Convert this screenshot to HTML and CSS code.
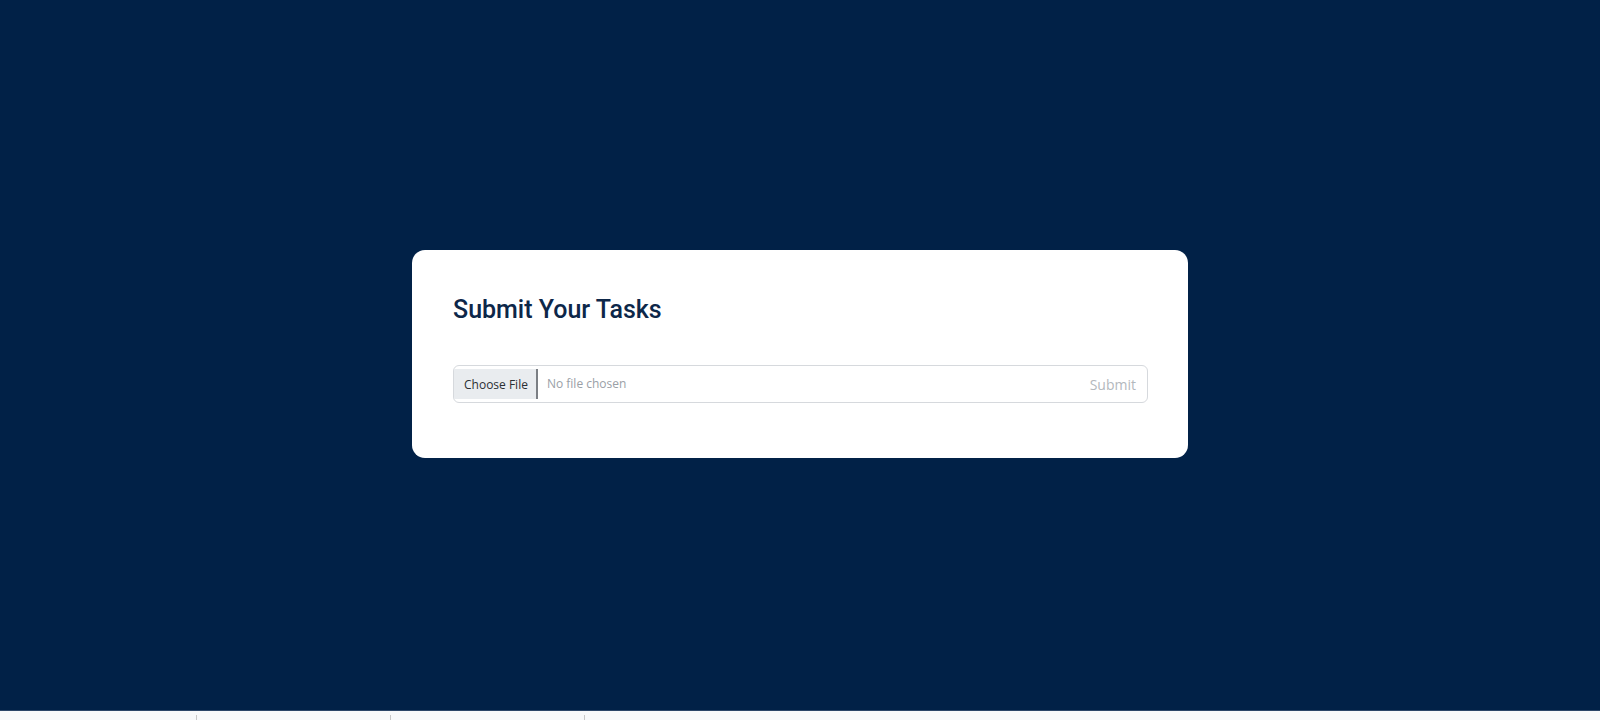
FILE: index.html
```html
<!DOCTYPE html>
<html lang="en">
<head>
<meta charset="utf-8">
<title>Submit Your Tasks</title>
<link rel="stylesheet" href="styles.css">
</head>
<body>
<div class="page">
  <main class="main">
    <section class="card">
      <h1 class="title">Submit Your Tasks</h1>
      <form class="upload">
        <div class="file">
          <span class="file-btn">Choose File</span>
          <span class="file-name">No file chosen</span>
        </div>
        <span class="submit">Submit</span>
      </form>
    </section>
  </main>
  <footer class="bar">
    <span class="tab first"></span>
    <span class="tab"></span>
    <span class="tab"></span>
    <span class="tab last"></span>
  </footer>
</div>
</body>
</html>
```

FILE: styles.css
```css
html, body {
  margin: 0;
  padding: 0;
  height: 100%;
}
body {
  background: #012147;
  font-family: "Open Sans", "Liberation Sans", sans-serif;
}
.page {
  display: flex;
  flex-direction: column;
  height: 720px;
}
.main {
  height: 710px;
  display: flex;
  align-items: center;
  justify-content: center;
  border-bottom: 1px solid #2c4668;
}
.card {
  box-sizing: border-box;
  width: 776px;
  height: 208px;
  margin-top: -3px;
  background: #ffffff;
  border-radius: 13px;
  padding: 45px 40px 0 41px;
}
.title {
  margin: 0;
  font-family: Roboto, "Liberation Sans", sans-serif;
  font-weight: 500;
  font-size: 25px;
  line-height: 30px;
  color: #0d2749;
}
.upload {
  margin-top: 40px;
  height: 38px;
  box-sizing: border-box;
  border: 1px solid #d6d9dd;
  border-radius: 6px;
  display: flex;
  align-items: center;
  justify-content: space-between;
}
.file {
  display: flex;
  align-items: center;
  height: 100%;
}
.file-btn {
  box-sizing: border-box;
  height: 30px;
  margin-top: 1px;
  padding: 0 8px 0 10px;
  background: #e9ecef;
  border-right: 2px solid #7b7f84;
  display: flex;
  align-items: center;
  font-size: 12px;
  color: #2b2f33;
}
.file-name {
  margin-left: 9px;
  font-size: 12px;
  color: #9aa0a6;
}
.submit {
  margin-right: 11px;
  font-size: 14px;
  color: #b3b8bd;
  margin-top: 1px;
}
.bar {
  flex: 1;
  display: flex;
  align-items: flex-end;
  background: #f8f9fa;
}
.tab {
  width: 193px;
  height: 5px;
  border-right: 1px solid #c8c8c8;
}
.tab.first {
  width: 196px;
}
.tab.last {
  border-right: none;
}
```
